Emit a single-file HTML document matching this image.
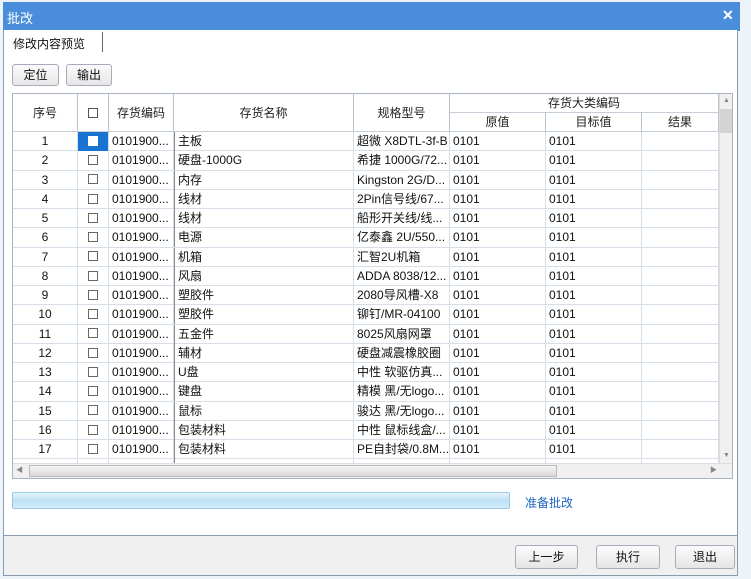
<!DOCTYPE html>
<html><head><meta charset="utf-8"><style>
*{margin:0;padding:0;box-sizing:border-box}
body{width:751px;height:579px;overflow:hidden;background:#eef3f9;font-family:"Liberation Sans","Noto Sans CJK SC",sans-serif;font-size:12px;color:#111;position:relative}
.a{position:absolute}
.title{left:3px;top:2px;width:737px;height:29px;background:#4a8ddb;color:#fff;font-size:13px;padding:6px 4px}
.panel{left:3px;top:30px;width:735px;height:506px;background:#fff;border:1px solid #8a9bb0;border-top:none}
.btn{border:1px solid #aab;border-radius:3px;background:linear-gradient(#fbfbfb,#e6e6e6);text-align:center;font-size:12px}
.grid{left:12px;top:93px;width:721px;height:386px;border:1px solid #a9b4c2;overflow:hidden;background:#fff}
.hd{position:absolute;background:#fff;text-align:center;color:#222;border-right:1px solid #b8c2cf;border-bottom:1px solid #c6ced8}
.row{position:absolute;left:0;width:706px;height:19.25px;border-bottom:1px solid #d6dee8}
.row div{position:absolute;top:0;height:19px;line-height:19px;border-right:1px solid #d6dee8;white-space:nowrap;overflow:hidden;padding-left:3px}
.cb{display:inline-block;width:10px;height:10px;border:1px solid #666;vertical-align:middle;margin-top:-2px}
</style></head><body>
<div class="a title">批改</div>
<div class="a" style="left:722px;top:7px;color:#fff;font-size:14px;font-weight:bold">✕</div>
<div class="a panel"></div>
<div class="a" style="left:6px;top:32px;width:97px;height:20px;border-right:1px solid #666;padding:3px 7px;font-size:12px">修改内容预览</div>
<div class="a btn" style="left:12px;top:64px;width:47px;height:22px;line-height:20px">定位</div>
<div class="a btn" style="left:66px;top:64px;width:46px;height:22px;line-height:20px">输出</div>
<div class="a grid">
 <div class="hd" style="left:0;top:0;width:65px;height:38px;line-height:38px">序号</div>
 <div class="hd" style="left:65px;top:0;width:31px;height:38px;line-height:38px"><span class="cb" style="border-color:#555"></span></div>
 <div class="hd" style="left:96px;top:0;width:65px;height:38px;line-height:38px">存货编码</div>
 <div class="hd" style="left:161px;top:0;width:180px;height:38px;line-height:38px">存货名称</div>
 <div class="hd" style="left:341px;top:0;width:96px;height:38px;line-height:38px">规格型号</div>
 <div class="hd" style="left:437px;top:0;width:269px;height:19px;line-height:19px">存货大类编码</div>
 <div class="hd" style="left:437px;top:19px;width:96px;height:19px;line-height:19px">原值</div>
 <div class="hd" style="left:533px;top:19px;width:96px;height:19px;line-height:19px">目标值</div>
 <div class="hd" style="left:629px;top:19px;width:77px;height:19px;line-height:19px">结果</div>
 <div id="rows"></div>
 <div class="a" style="left:706px;top:0;width:14px;height:370px;background:#f0f0f0;border-left:1px solid #ddd"></div>
 <div class="a" style="left:707px;top:15px;width:12px;height:24px;background:#d4d4d4"></div>
 <div class="a" style="left:710px;top:3px;font-size:7px;color:#888">▲</div>
 <div class="a" style="left:710px;top:358px;font-size:7px;color:#888">▼</div>
 <div class="a" style="left:0;top:369px;width:720px;height:16px;background:#f0f0f0;border-top:1px solid #ddd"></div>
 <div class="a" style="left:16px;top:371px;width:528px;height:12px;background:linear-gradient(#f4f4f4,#d8d8d8);border:1px solid #bbb"></div>
 <div class="a" style="left:3px;top:371px;font-size:7px;color:#888">◀</div>
 <div class="a" style="left:697px;top:371px;font-size:7px;color:#888">▶</div>
</div>
<div class="a" style="left:12px;top:492px;width:498px;height:17px;border:1px solid #9cc8e8;border-radius:2px;background:linear-gradient(#e6f4fc,#bfe0f4 50%,#d4ecf9)"></div>
<div class="a" style="left:525px;top:494px;color:#1b66c0;font-size:12px">准备批改</div>
<div class="a" style="left:3px;top:536px;width:735px;height:40px;background:#f0f0f0;border-left:1px solid #8a9bb0;border-right:1px solid #8a9bb0;border-bottom:1px solid #8a9bb0"></div>
<div class="a btn" style="left:515px;top:545px;width:63px;height:24px;line-height:22px">上一步</div>
<div class="a btn" style="left:596px;top:545px;width:64px;height:24px;line-height:22px">执行</div>
<div class="a btn" style="left:675px;top:545px;width:60px;height:24px;line-height:22px">退出</div>
<script>
var d=[["主板","超微 X8DTL-3f-B"],["硬盘-1000G","希捷 1000G/72..."],["内存","Kingston 2G/D..."],["线材","2Pin信号线/67..."],["线材","船形开关线/线..."],["电源","亿泰鑫 2U/550..."],["机箱","汇智2U机箱"],["风扇","ADDA 8038/12..."],["塑胶件","2080导风槽-X8"],["塑胶件","铆钉/MR-04100"],["五金件","8025风扇网罩"],["辅材","硬盘减震橡胶圈"],["U盘","中性 软驱仿真..."],["键盘","精模 黑/无logo..."],["鼠标","骏达 黑/无logo..."],["包装材料","中性 鼠标线盒/..."],["包装材料","PE自封袋/0.8M..."],["",""]];
var h="";
for(var i=0;i<18;i++){var t=38+i*19.25;
h+='<div class="row" style="top:'+t+'px">'+
'<div style="left:0;width:65px;text-align:center;padding:0">'+(i+1)+'</div>'+
'<div style="left:65px;width:31px;text-align:center;padding:0;'+(i==0?'background:#1a73d0':'')+'"><span class="cb" style="'+(i==0?'background:#fff;border-color:#fff':'')+'"></span></div>'+
'<div style="left:96px;width:65px">0101900...</div>'+
'<div style="left:161px;width:180px;border-left:1px solid #888">'+d[i][0]+'</div>'+
'<div style="left:341px;width:96px">'+d[i][1]+'</div>'+
'<div style="left:437px;width:96px">0101</div>'+
'<div style="left:533px;width:96px">0101</div>'+
'<div style="left:629px;width:77px"></div></div>';}
document.getElementById("rows").innerHTML=h;
</script>
</body></html>
